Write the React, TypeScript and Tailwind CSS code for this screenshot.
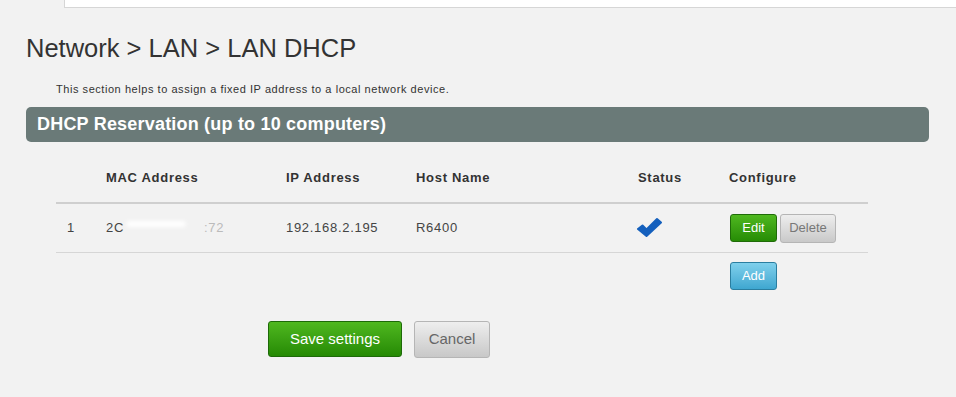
import React from 'react';

const font = { fontFamily: '"Liberation Sans", Arial, sans-serif' };

const CheckIcon = () => (
  <svg width="26" height="21" viewBox="0 0 26 21">
    <path d="M2 12 L6.5 8.5 L10.5 12.5 L21 2 L25 5.5 L10.5 19 Z" fill="#1560bd" stroke="#1560bd" strokeWidth="2" strokeLinejoin="round" />
  </svg>
);

export default function App() {
  return (
    <div className="w-[956px] h-[397px] bg-[#f2f2f2] text-[#333] overflow-hidden" style={font}>
      <div className="ml-[64px] h-[8px] bg-white border-l border-b border-[#d6d6d6]" />

      <h1 className="ml-[26px] mt-[25px] text-[25.5px] leading-[30px] text-[#333]">Network &gt; LAN &gt; LAN DHCP</h1>

      <p className="ml-[56px] mt-[19px] text-[11px] leading-[14px] tracking-[0.55px] text-[#333]">
        This section helps to assign a fixed IP address to a local network device.
      </p>

      <div className="ml-[26px] mt-[11px] w-[903px] h-[35px] rounded-[5px] bg-[#6a7a78] flex items-center pl-[11px]">
        <span className="text-white font-bold text-[18px] tracking-[0.2px]">DHCP Reservation (up to 10 computers)</span>
      </div>

      <div className="ml-[56px] mt-[18px] w-[812px] text-[13px] tracking-[0.7px]">
        <div className="flex items-start pt-[10px] leading-[16px] h-[44px] border-b-2 border-[#cfcfcf] font-bold text-[#333]">
          <div className="w-[50px]" />
          <div className="w-[180px]">MAC Address</div>
          <div className="w-[130px]">IP Address</div>
          <div className="w-[222px]">Host Name</div>
          <div className="w-[91px]">Status</div>
          <div>Configure</div>
        </div>
        <div className="flex items-center h-[49px] border-b border-[#d6d6d6] text-[#444]">
          <div className="w-[50px] pl-[11px]">1</div>
          <div className="w-[180px] flex">
            <span>2C</span>
            <span className="ml-[2px] w-[60px] h-[6px] mt-[3px] rounded-full bg-white blur-[2px]" />
            <span className="ml-[18px] text-[#bbb]">:72</span>
          </div>
          <div className="w-[130px]">192.168.2.195</div>
          <div className="w-[222px]">R6400</div>
          <div className="w-[91px] mt-[-2px] ml-[-2px]"><CheckIcon /></div>
          <div className="flex gap-[3px] items-center tracking-normal pl-[3px]">
            <button className="w-[47px] h-[28px] rounded-[3px] border border-[#1f6b08] bg-gradient-to-b from-[#4fb81f] to-[#268c05] text-white text-[13px]">Edit</button>
            <button className="w-[56px] h-[29px] rounded-[3px] border border-[#b5b5b5] bg-gradient-to-b from-[#eeeeee] to-[#c9c9c9] text-[#777] text-[13px]">Delete</button>
          </div>
        </div>
        <div className="flex h-[48px] items-start pt-[9px] tracking-normal">
          <div className="w-[674px]" />
          <button className="w-[47px] h-[28px] rounded-[3px] border border-[#2a7ea0] bg-gradient-to-b from-[#7fd0ec] to-[#3ea7d0] text-white text-[13px]">Add</button>
        </div>
      </div>

      <div className="ml-[268px] mt-[20px] flex gap-[12px]">
        <button className="w-[134px] h-[36px] rounded-[3px] border border-[#1d6a08] bg-gradient-to-b from-[#4fb81f] to-[#258a04] text-white text-[15px]">Save settings</button>
        <button className="w-[76px] h-[37px] rounded-[3px] border border-[#b5b5b5] bg-gradient-to-b from-[#eeeeee] to-[#c8c8c8] text-[#666] text-[15px]">Cancel</button>
      </div>
    </div>
  );
}
